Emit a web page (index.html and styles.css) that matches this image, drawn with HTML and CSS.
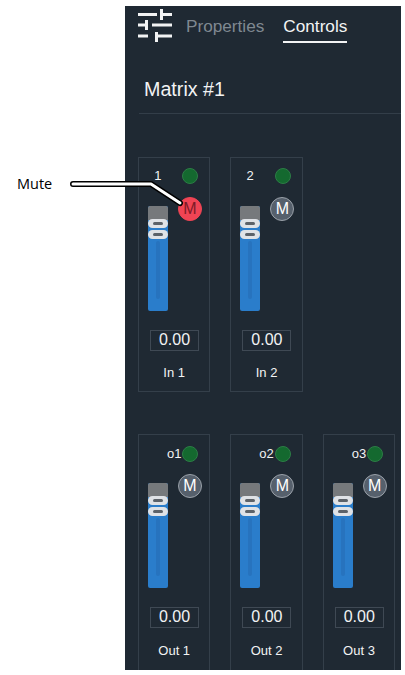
FILE: index.html
```html
<!DOCTYPE html>
<html lang="en">
<head>
<meta charset="utf-8">
<title>Matrix Controls</title>
<link rel="stylesheet" href="styles.css">
</head>
<body>
<span class="callout-label">Mute</span>
<svg class="callout-line" width="200" height="60" viewBox="0 0 200 60">
  <path d="M73 14 H151 L180 33" fill="none" stroke="#000" stroke-width="6" stroke-linecap="round" stroke-linejoin="round"/>
  <path d="M73 14 H151 L180 33" fill="none" stroke="#fff" stroke-width="3" stroke-linecap="round" stroke-linejoin="round"/>
</svg>
<main class="panel">
  <header class="tabs">
    <svg class="tabs-icon" width="34" height="33" viewBox="0 0 34 33">
      <path d="M0 5.500H19M25 5.500H34M23.500 0V11M0 16H7M8.500 11V21M14 16H34M0 27H10M20 27H34M18.500 23V33" fill="none" stroke="#f2f3f4" stroke-width="3"/>
    </svg>
    <span class="tab">Properties</span>
    <span class="tab tab-active">Controls</span>
  </header>
  <h1 class="title">Matrix #1</h1>
  <div class="divider"></div>
  <section class="row row-in">
    <article class="card">
      <div class="head head-in"><span class="name">1</span><span class="led"></span></div>
      <div class="strip">
        <div class="fader"><span class="fader-cap"></span><span class="pill"></span><span class="pill"></span></div>
        <span class="mute mute-on">M</span>
      </div>
      <div class="value">0.00</div>
      <div class="label">In 1</div>
    </article>
    <article class="card">
      <div class="head head-in"><span class="name">2</span><span class="led"></span></div>
      <div class="strip">
        <div class="fader"><span class="fader-cap"></span><span class="pill"></span><span class="pill"></span></div>
        <span class="mute">M</span>
      </div>
      <div class="value">0.00</div>
      <div class="label">In 2</div>
    </article>
  </section>
  <section class="row row-out">
    <article class="card">
      <div class="head"><span class="name">o1</span><span class="led"></span></div>
      <div class="strip">
        <div class="fader"><span class="fader-cap"></span><span class="pill"></span><span class="pill"></span></div>
        <span class="mute">M</span>
      </div>
      <div class="value">0.00</div>
      <div class="label">Out 1</div>
    </article>
    <article class="card">
      <div class="head"><span class="name">o2</span><span class="led"></span></div>
      <div class="strip">
        <div class="fader"><span class="fader-cap"></span><span class="pill"></span><span class="pill"></span></div>
        <span class="mute">M</span>
      </div>
      <div class="value">0.00</div>
      <div class="label">Out 2</div>
    </article>
    <article class="card">
      <div class="head"><span class="name">o3</span><span class="led"></span></div>
      <div class="strip">
        <div class="fader"><span class="fader-cap"></span><span class="pill"></span><span class="pill"></span></div>
        <span class="mute">M</span>
      </div>
      <div class="value">0.00</div>
      <div class="label">Out 3</div>
    </article>
  </section>
</main>
</body>
</html>
```
FILE: styles.css
```css
* { box-sizing: border-box; }
html, body { margin: 0; height: 675px; overflow: hidden; background: #fff; }
body { font-family: "Liberation Sans", Arial, sans-serif; position: relative; padding: 6px 0 0 125px; }

.callout-label {
  position: absolute; left: 17px; top: 175px;
  font: 14.500px/18px "Open Sans", sans-serif; color: #000; z-index: 2;
}
.callout-line { position: absolute; left: 0; top: 170px; z-index: 2; }

.panel { width: 276px; height: 664px; background: #1f2933; color: #f2f3f4; overflow: hidden; }

.tabs { display: flex; align-items: flex-start; height: 36px; padding: 3px 0 0 13px; }
.tabs-icon { flex: none; }
.tab { font-size: 17.200px; line-height: 20px; color: #7f8891; margin: 7px 0 0 14px; height: 27px; }
.tab-active { color: #f2f3f4; margin-left: 19px; border-bottom: 2px solid #f2f3f4; }

.title { margin: 0; padding: 0 0 0 19px; font-size: 19.700px; font-weight: 400; line-height: 22px; margin-top: 36px; }
.divider { height: 1px; background: #333e49; margin: 13px 0 0 14px; }

.row { display: flex; gap: 20px; padding-left: 13px; }
.row-in { margin-top: 43px; }
.row-out { margin-top: 42px; }

.card { flex: none; width: 72.400px; height: 235px; border: 1px solid #343f4a; }
.row-out .card { height: 240px; }

.head { display: flex; justify-content: flex-end; align-items: center; gap: 1px; height: 16px; margin-top: 10px; padding-right: 11px; font-size: 13px; }
.head-in { gap: 21px; }
.row-out .head { margin-top: 11px; }
.row-out .strip { margin-top: 12px; }
.name { line-height: 16px; }
.led { flex: none; width: 16px; height: 16px; border-radius: 50%; background: #14692f; border: 1px solid #2c7d46; }

.strip { display: flex; height: 114px; margin-top: 13px; }
.fader { flex: none; width: 20px; height: 105px; margin: 9px 0 0 9px; border-radius: 2px; background: #2a7dcb; position: relative; }
.fader::after { content: ""; position: absolute; left: 8px; width: 4px; top: 35px; bottom: 12px; background: #2773be; border-radius: 2px; }
.fader-cap { display: block; height: 14px; background: #76797c; border-radius: 2px 2px 0 0; margin-bottom: -1px; position: relative; }
.pill { display: block; height: 9px; margin-bottom: 2px; border-radius: 4.500px; background: #dfe2e6; position: relative; }
.pill::after { content: ""; position: absolute; left: 5px; right: 5px; top: 3px; height: 3px; border-radius: 2px; background: #5c6269; }

.mute { flex: none; width: 24px; height: 24px; margin-left: 10px; border-radius: 50%; background: #56606c; border: 1px solid #9aa1a9; color: #fff; font-size: 16px; line-height: 22px; text-align: center; }
.mute-on { background: #ef4454; border-color: #ef4454; color: #7d1b27; }

.value { width: 49px; height: 21px; margin: 19px 0 0 11px; border: 1px solid #3f4954; text-align: center; font-size: 16px; line-height: 18px; }
.label { font-size: 13px; line-height: 16px; text-align: center; margin-top: 14px; }
.row-out .label { margin-top: 15px; }
```
